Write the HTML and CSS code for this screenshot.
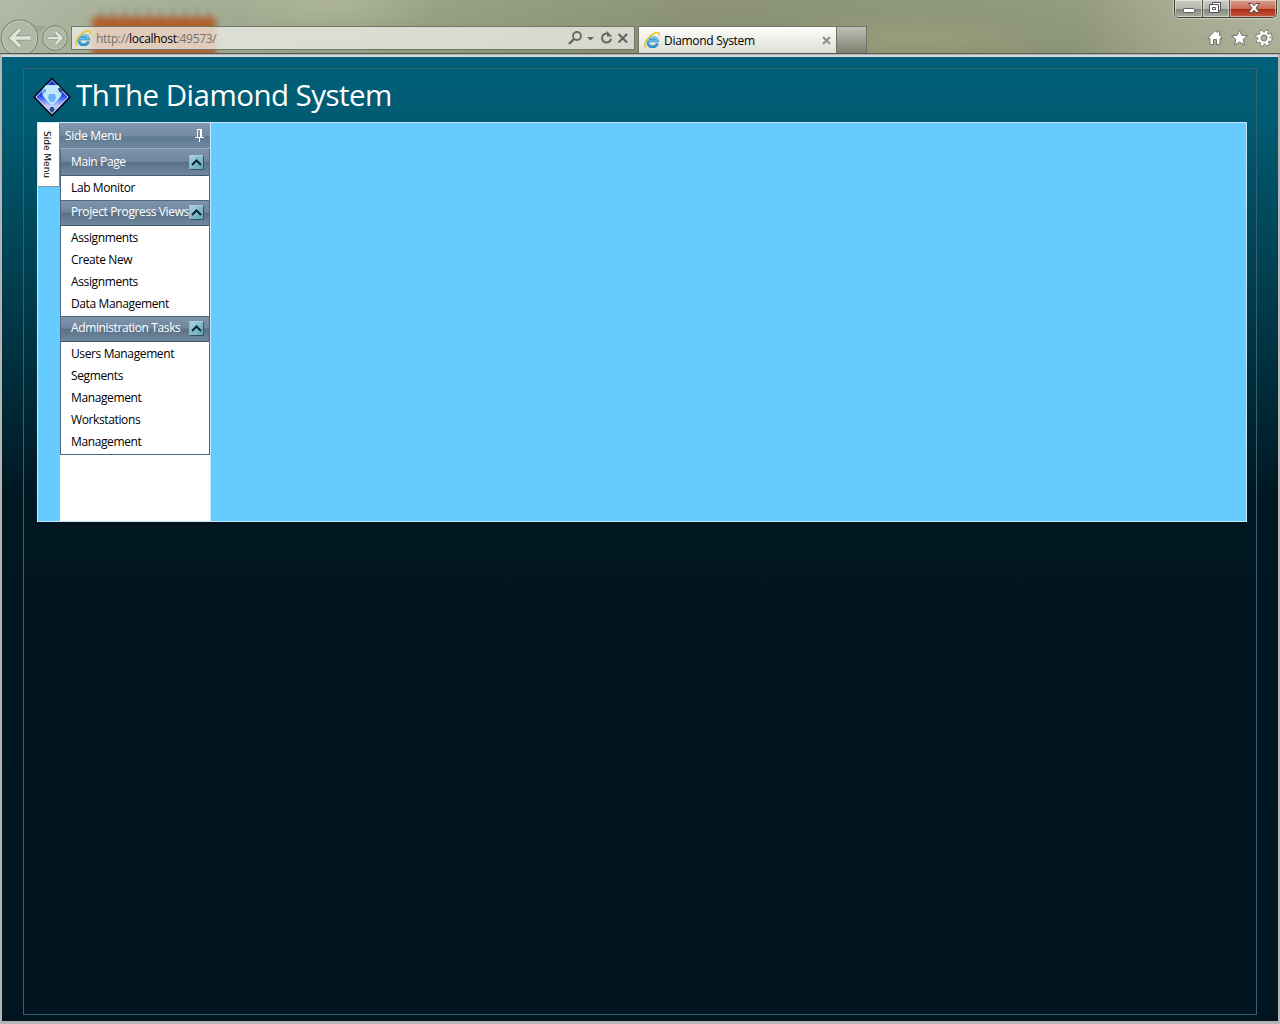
FILE: index.html
```html
<!DOCTYPE html>
<html lang="en">

<head>
    <meta charset="UTF-8">
    <title>Diamond System</title>
    <link rel="stylesheet" href="styles.css">
</head>

<body>
    <svg class="defs" width="0" height="0">
        <defs>
            <linearGradient id="ieBlue" x1="0" y1="0" x2="0" y2="1">
                <stop offset="0" stop-color="#7fd2f6"/>
                <stop offset="1" stop-color="#2f93d2"/>
            </linearGradient>
            <linearGradient id="gem" x1="0" y1="0" x2="0" y2="1">
                <stop offset="0" stop-color="#1238d8"/>
                <stop offset="0.48" stop-color="#2c50f0"/>
                <stop offset="0.75" stop-color="#c4d0ff"/>
                <stop offset="1" stop-color="#7f9cf4"/>
            </linearGradient>
            <symbol id="ie" viewBox="0 0 16 16">
                <path d="M13.4 11.300A4.900 4.900 0 1 1 13.400 8.800H5" fill="none" stroke="#2f83ba" stroke-width="2.900"/>
                <path d="M13.200 11.300A4.900 4.900 0 1 1 13.400 8.800H5" fill="none" stroke="url(#ieBlue)" stroke-width="1.900"/>
                <path d="M2.400 14.800C-.4 15.200.2 10.700 4.300 6.100 8.400 1.600 13.500-.8 15 1.100c.6.8.4 2-.2 3.300" fill="none" stroke="#efc22a" stroke-width="1.500"/>
            </symbol>
        </defs>
    </svg>

    <div class="browser">
        <div class="chrome">
            <div class="glow"></div>
            <div class="titlebar">
                <div class="window-buttons">
                    <span class="min"><svg width="28" height="17"><rect x="8.500" y="8.500" width="11" height="4" rx="1" fill="#fff" stroke="#5a5f60"/></svg></span>
                    <span class="max"><svg width="26" height="17"><path d="M9.500 2.500h8v8h-2v2h-9v-8h3z" fill="#fff" stroke="#50535c"/><path d="M8.500 4.500h7v7M9.500 7.500h3v2h-3z" fill="none" stroke="#50535c"/></svg></span>
                    <span class="close"><svg width="46" height="17"><path d="M18.500 3.500h3.500l2 2.300 2-2.300h3.500L26 8l3.500 4.500H26l-2-2.400-2 2.400h-3.500L22 8z" fill="#fff" stroke="#60484a"/></svg></span>
                </div>
            </div>
            <div class="navbar">
                <svg class="nav-buttons" width="71" height="36">
                    <path d="M31 5.500c5 2 9 3 15 2.500l-7 8z" fill="#8b957e" opacity=".4"/>
                    <circle cx="19.500" cy="20" r="18.200" fill="#b6bcab" fill-opacity=".65" stroke="#777e6f"/>
                    <circle cx="19.500" cy="20" r="17" fill="none" stroke="#d0d4c8" stroke-opacity=".5"/>
                    <circle cx="55" cy="20" r="12.300" fill="#b6bcab" fill-opacity=".65" stroke="#777e6f"/>
                    <circle cx="55" cy="20" r="11.200" fill="none" stroke="#d0d4c8" stroke-opacity=".5"/>
                    <path d="M20 11.500l-8.500 8.500 8.500 8.500M12 20h18.500" fill="none" stroke="#8b9184" stroke-width="5"/>
                    <path d="M20 11.500l-8.500 8.500 8.500 8.500M12 20h18.500" fill="none" stroke="#e0e3da" stroke-width="3.400"/>
                    <path d="M55.500 14l6 6-6 6M61 20H48" fill="none" stroke="#8b9184" stroke-width="4"/>
                    <path d="M55.500 14l6 6-6 6M61 20H48" fill="none" stroke="#e0e3da" stroke-width="2.600"/>
                </svg>
                <div class="address">
                    <svg width="16" height="16"><use href="#ie"/></svg>
                    <span class="url">http://<b>localhost</b>:49573/</span>
                    <svg class="address-icons" width="69" height="22" fill="none" stroke="#626660">
                        <circle cx="12" cy="9" r="4" stroke-width="1.800"/>
                        <path d="M9 12l-5 5" stroke-width="2.400"/>
                        <path d="M22 10h7l-3.500 3.500z" fill="#626660" stroke="none"/>
                        <path d="M46 11.500a4.500 4.500 0 1 1-3.300-4.800" stroke-width="2"/>
                        <path d="M42 4v5.500h5z" fill="#626660" stroke="none"/>
                        <path d="M53.500 7l8.500 8.500M62 7l-8.500 8.500" stroke-width="2.200"/>
                    </svg>
                </div>
                <div class="tab">
                    <svg width="16" height="16"><use href="#ie"/></svg>
                    <span class="tab-title">Diamond System</span>
                    <svg width="9" height="9"><path d="M1 1l7 7M8 1L1 8" stroke="#8f908c" stroke-width="2"/></svg>
                </div>
                <div class="new-tab"></div>
                <svg class="tools" width="70" height="22" fill="#fff" stroke="#74796d">
                    <path d="M1.500 11.500L9 3.500l2 2V4h2.500v4l3 3.500h-2.500v6H10.500v-5h-3v5H4v-6z"/>
                    <path d="M33.500 3l2.200 5.200 5.800.5-4.400 3.700 1.400 5.600-5-3-5 3 1.400-5.600-4.400-3.700 5.800-.5z"/>
                    <g fill="none">
                        <circle cx="58" cy="11" r="6.500" stroke="#74796d" stroke-width="4.500" stroke-dasharray="3 2.105"/>
                        <circle cx="58" cy="11" r="4.700" stroke="#74796d" stroke-width="4.200"/>
                        <circle cx="58" cy="11" r="6.400" stroke="#fff" stroke-width="2.800" stroke-dasharray="2.500 2.526" stroke-dashoffset="-.3"/>
                        <circle cx="58" cy="11" r="4.600" stroke="#fff" stroke-width="2.400"/>
                    </g>
                </svg>
            </div>
        </div>

        <div class="page">
            <div class="frame">
                <div class="header">
                    <svg class="logo" width="38" height="40" viewBox="0 0 38 40">
                        <path d="M19 1.500L37 20 19 38.500 1 20z" fill="url(#gem)" stroke="#0b0d1c" stroke-width="1.600"/>
                        <path d="M19 3.500L35 20 19 36.500 3 20z" fill="none" stroke="#ccd0e8" stroke-width="1"/>
                        <path d="M13 8h12l4 5-1 6-5 6-4 3-4-3-5-6-1-6z" fill="#bfe8ff"/>
                        <path d="M16 17h6l1 4-2 4h-4l-2-4zM9 12h4v3l-3 2z" fill="#68b2f5"/>
                        <path d="M25 11h4v5l-3-1z" fill="#26568a"/>
                        <path d="M17.500 30h3l1 3-2.500 3-2.500-3z" fill="#264f91"/>
                        <path d="M19 4l4 4h-8z" fill="#143dcc"/>
                    </svg>
                    <h1>ThThe Diamond System</h1>
                </div>

                <div class="content">
                    <div class="rail">
                        <div class="rail-tab"><span>Side Menu</span></div>
                    </div>
                    <div class="side-pane">
                        <div class="pane-title">
                            <span>Side Menu</span>
                            <svg width="9" height="14" fill="none" stroke="#fff"><path d="M2.500 9V1.500h4V9M0 9.500h9M4.500 9.500V14"/><path d="M6 1v8" stroke-width="2"/></svg>
                        </div>
                        <div class="menu">
                            <div class="group-title first">
                                <span>Main Page</span>
                                <i class="toggle"><svg width="13" height="13"><path d="M2 9l4.500-4.500L11 9" fill="none" stroke="#0b2633" stroke-width="2"/></svg></i>
                            </div>
                            <ul>
                                <li>Lab Monitor</li>
                            </ul>
                            <div class="group-title">
                                <span>Project Progress Views</span>
                                <i class="toggle"><svg width="13" height="13"><path d="M2 9l4.500-4.500L11 9" fill="none" stroke="#0b2633" stroke-width="2"/></svg></i>
                            </div>
                            <ul>
                                <li>Assignments</li>
                                <li>Create New<br>Assignments</li>
                                <li>Data Management</li>
                            </ul>
                            <div class="group-title">
                                <span>Administration Tasks</span>
                                <i class="toggle"><svg width="13" height="13"><path d="M2 9l4.500-4.500L11 9" fill="none" stroke="#0b2633" stroke-width="2"/></svg></i>
                            </div>
                            <ul>
                                <li>Users Management</li>
                                <li>Segments<br>Management</li>
                                <li>Workstations<br>Management</li>
                            </ul>
                        </div>
                    </div>
                </div>
            </div>
        </div>
    </div>
</body>

</html>
```

FILE: styles.css
```css
* {
    box-sizing: border-box;
}

body {
    margin: 0;
    font-family: "Open Sans", "Noto Sans", sans-serif;
    font-size: 12px;
    letter-spacing: -0.3px;
    color: #000;
}

svg {
    display: block;
    flex: none;
}

.defs {
    position: absolute;
}

.browser {
    width: 1280px;
    height: 1024px;
    display: flex;
    flex-direction: column;
    overflow: hidden;
    background: #b5b5b5;
}

/* browser window */
.chrome {
    position: relative;
    height: 54px;
    border-bottom: 1px solid #56594f;
    overflow: hidden;
    background:
        radial-gradient(ellipse 110px 40px at 330px 0, rgba(188, 194, 160, 0.55), transparent),
        radial-gradient(ellipse 160px 30px at 910px 38px, rgba(170, 168, 137, 0.5), transparent),
        linear-gradient(180deg, rgba(255, 255, 255, 0.08), transparent),
        linear-gradient(90deg, #abb5a1 0, #a5ae97 70px, #9ba58b 240px, #8e9876 480px, #848b6d 700px, #86906f 960px, #8c9476 1080px, #a1a58a 1170px, #abb097 1280px);
}

.glow {
    position: absolute;
    left: 92px;
    top: 16px;
    width: 124px;
    height: 44px;
    background: #b0622f;
    filter: blur(3px);
}

.glow::before {
    content: "";
    position: absolute;
    left: 0;
    top: -6px;
    width: 124px;
    height: 7px;
    background: repeating-linear-gradient(90deg, #b4b7a0 0 6px, #92957d 6px 12px);
}

.titlebar {
    position: relative;
    height: 18px;
    display: flex;
    justify-content: flex-end;
    padding-right: 3px;
}

.window-buttons {
    display: flex;
    height: 18px;
    border: 1px solid #3f4139;
    border-top: 0;
    border-radius: 0 0 5px 5px;
    box-shadow: 0 0 0 1px rgba(225, 228, 215, 0.6);
    overflow: hidden;
}

.window-buttons span {
    background: linear-gradient(180deg, #c9cbc1 0, #b4b7aa 50%, #83877b 52%, #aaaea0 100%);
    border-right: 1px solid #50534c;
    box-shadow: inset 0 0 0 1px rgba(255, 255, 255, 0.45);
}

.window-buttons .min {
    width: 28px;
}

.window-buttons .max {
    width: 27px;
}

.window-buttons .close {
    width: 46px;
    border-right: 0;
    background: linear-gradient(180deg, #d9a08f 0, #c96c58 50%, #a72a11 52%, #c8583c 100%);
}

.navbar {
    position: relative;
    height: 35px;
    display: flex;
    align-items: flex-start;
}

.address {
    width: 564px;
    height: 24px;
    margin-top: 8px;
    padding-left: 3px;
    display: flex;
    align-items: center;
    border: 1px solid #72776a;
    background: rgba(244, 244, 240, 0.72);
}

.url {
    flex: 1;
    margin-left: 5px;
    padding-top: 1px;
    color: #74746c;
    line-height: 20px;
}

.url b {
    font-weight: normal;
    color: #000;
}

.tab {
    width: 199px;
    height: 27px;
    margin: 8px 0 0 3px;
    padding: 0 5px;
    display: flex;
    align-items: center;
    border: 1px solid #6f7469;
    border-bottom: 0;
    background: linear-gradient(180deg, #fdfdfb, #dddfd6);
}

.tab-title {
    flex: 1;
    margin-left: 4px;
}

.new-tab {
    width: 30px;
    height: 27px;
    margin-top: 8px;
    border: 1px solid #6f7469;
    border-left: 0;
    border-bottom: 0;
    background: linear-gradient(180deg, #bdc0b3, #7c8071);
}

.tools {
    margin: 9px 4px 0 auto;
}

/* web page */
.page {
    flex: 1;
    margin: 3px 2px 3px;
    padding: 11px 21px 6px;
    background: linear-gradient(180deg, #00607a 0, #005b72 60px, #001620 450px, #00151f 100%);
    box-shadow: 0 -2px 0 #d4dadb;
}

.frame {
    height: 947px;
    width: 1234px;
    padding: 0 9px 0 13px;
    border: 1px solid #385f70;
}

.header {
    height: 53px;
    margin-left: -4px;
    padding-top: 8px;
    display: flex;
}

h1 {
    margin: -4px 0 0 5px;
    color: #fff;
    font-size: 29.5px;
    font-weight: normal;
    letter-spacing: -0.53px;
    line-height: 44px;
    white-space: nowrap;
}

.content {
    width: 1210px;
    height: 400px;
    display: flex;
    border: 1px solid #c5e8fb;
    background: #66ccff;
}

.rail {
    width: 22px;
}

.rail-tab {
    width: 22px;
    height: 64px;
    padding-top: 8px;
    background: #fff;
    border-right: 1px solid #6b87a5;
    border-bottom: 1px solid #7b9ab4;
}

.rail-tab span {
    display: block;
    width: 18px;
    writing-mode: vertical-rl;
    font-family: "DejaVu Sans", sans-serif;
    font-size: 9px;
    letter-spacing: 0;
    line-height: 18px;
    white-space: nowrap;
}

.side-pane {
    width: 151px;
    background: #fff;
    border-right: 1px solid #c5e8fb;
}

.pane-title {
    height: 26px;
    padding: 0 6px 0 5px;
    display: flex;
    align-items: center;
    justify-content: space-between;
    color: #fff;
    background: linear-gradient(180deg, #8297ad 0, #748ba2 50%, #60788f 56%, #6f8ba3 100%);
    border-bottom: 1px solid #98abbd;
}

.pane-title svg {
    margin-top: -1px;
}

.menu {
    border: 1px solid #4d6880;
    border-top: 0;
    letter-spacing: -0.38px;
}

.group-title {
    height: 26px;
    padding: 0 5px 3px 10px;
    display: flex;
    align-items: center;
    justify-content: space-between;
    color: #fff;
    white-space: nowrap;
    background: linear-gradient(180deg, #7e94ab 0, #70869e 46%, #596f85 50%, #70899f 100%);
    border-top: 1px solid #4d6880;
    border-bottom: 1px solid #405a70;
}

.group-title.first {
    height: 27px;
    padding-bottom: 2px;
    border-top-color: #7990a6;
}

.group-title span {
    width: 118px;
}

.toggle {
    width: 15px;
    height: 15px;
    margin-top: 1px;
    border: 1px solid #31566a;
    border-top-color: #a4cfdb;
    border-left-color: #8cbccb;
    background: linear-gradient(135deg, #a5d3dd, #63a4b8);
    flex: none;
}

ul {
    margin: 0;
    padding: 1px 0;
    list-style: none;
}

li {
    padding-left: 10px;
    line-height: 22px;
}
```
